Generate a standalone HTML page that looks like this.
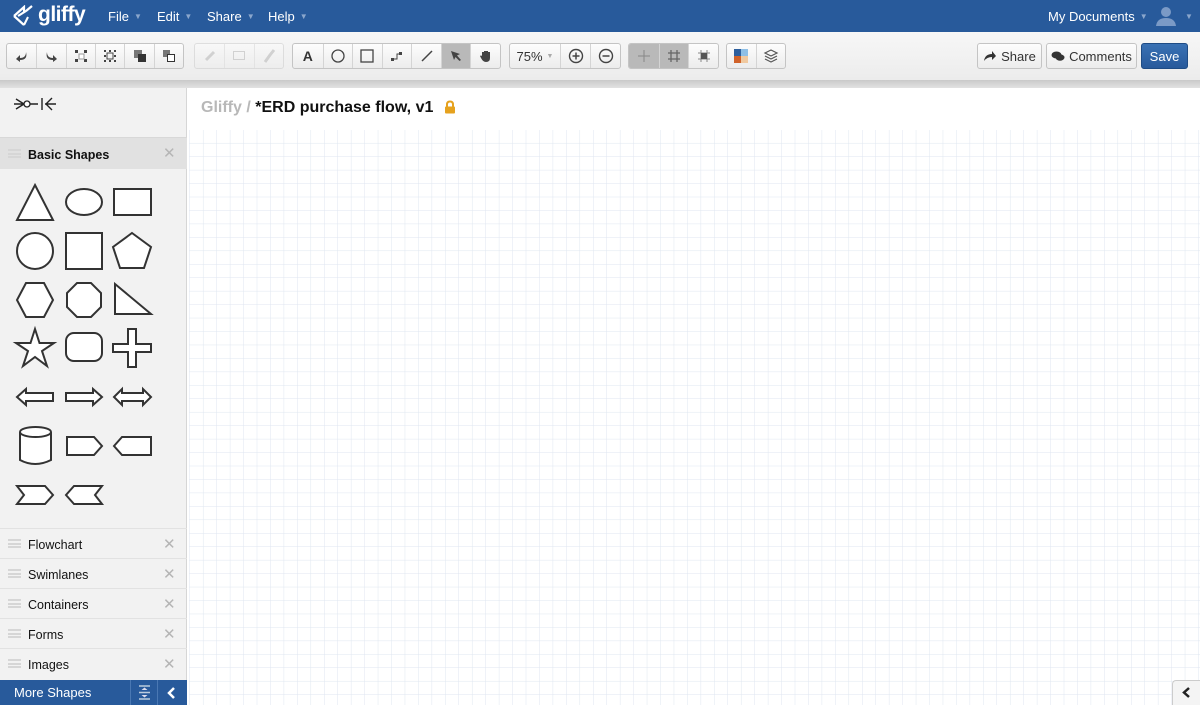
<!DOCTYPE html>
<html><head><meta charset="utf-8"><style>
*{margin:0;padding:0;box-sizing:border-box}
body{width:1200px;height:705px;overflow:hidden;font-family:"Liberation Sans",Arial,sans-serif;background:#fff;position:relative}
.hdr{position:absolute;left:0;top:0;width:1200px;height:32px;background:#285a9b}
.hdr .m{position:absolute;top:9px;color:#fff;font-size:13px}
.hdr .m i{font-style:normal;color:#8aa6cc;font-size:8px;margin-left:5px;vertical-align:2px}
.tb{position:absolute;left:0;top:32px;width:1200px;height:48px;background:linear-gradient(#f7f7f7,#ececec)}
.strip{position:absolute;left:0;top:80px;width:1200px;height:8px;background:linear-gradient(#c9c9c9,#e2e2e2)}
.g{position:absolute;top:11px;height:26px;border:1px solid #c4c4c4;border-radius:3px;background:linear-gradient(#fdfdfd,#ececec);display:flex;overflow:hidden}
.g span{display:flex;align-items:center;justify-content:center;width:30px;height:100%;border-left:1px solid #d4d4d4}
.g span:first-child{border-left:none}
.g span.on{background:#b9b9b9}
.btn{position:absolute;top:11px;height:26px;border:1px solid #c4c4c4;border-radius:3px;background:linear-gradient(#fdfdfd,#ececec);font-size:13px;color:#333;display:flex;align-items:center;justify-content:center;gap:4px}
.left{position:absolute;left:0;top:88px;width:187px;height:592px;background:#f2f2f2;border-right:1px solid #d6d6d6}
.sec{position:absolute;left:0;width:187px;height:30px;border-top:1px solid #e2e2e2;font-size:12.5px;color:#111}
.sec .h{position:absolute;left:8px;top:10px;width:13px;height:9px;border-top:2px solid #d6d6d6;border-bottom:2px solid #d6d6d6}
.sec .h:after{content:"";position:absolute;left:0;top:2px;width:13px;height:2px;background:#d6d6d6}
.sec .t{position:absolute;left:28px;top:9px}
.sec .x{position:absolute;left:163px;top:6px;color:#b5b5b5;font-size:15px}
.foot{position:absolute;left:0;top:680px;width:187px;height:25px;background:#285a9b;color:#fff;font-size:13px}
.canvas{position:absolute;left:189px;top:88px;width:1011px;height:617px;background:#fff}
</style></head><body>
<div class="hdr">
 <svg style="position:absolute;left:12px;top:5px" width="26" height="22" viewBox="0 0 26 22"><path d="M2 11 L12 2 L12 8 M2 11 L12 20 M6 11 L14 6 M14 6 L20 1" stroke="#fff" stroke-width="2.2" fill="none"/><path d="M12 20 L16 12" stroke="#fff" stroke-width="2"/></svg>
 <div style="position:absolute;left:38px;top:3px;color:#fff;font-size:21px;font-weight:bold;letter-spacing:-0.5px">gliffy</div>
 <div class="m" style="left:108px">File<i>▼</i></div>
 <div class="m" style="left:157px">Edit<i>▼</i></div>
 <div class="m" style="left:207px">Share<i>▼</i></div>
 <div class="m" style="left:268px">Help<i>▼</i></div>
 <div class="m" style="left:1048px">My Documents<i>▼</i></div>
 <svg style="position:absolute;left:1155px;top:6px" width="22" height="20" viewBox="0 0 22 20"><circle cx="11" cy="6" r="5" fill="#7b9ac6"/><path d="M1 20 Q2 12 11 12 Q20 12 21 20Z" fill="#7b9ac6"/></svg>
 <div class="m" style="left:1180px"><i>▼</i></div>
</div>
<div class="tb">
 <div class="g" style="left:6px;width:178px">
  <span><svg width="14" height="14"><path d="M11 3 Q11 9 5 9 L5 6 L1 10 L5 13 L5 11 Q13 11 11 3Z" fill="#444"/></svg></span>
  <span><svg width="14" height="14"><path d="M3 3 Q3 9 9 9 L9 6 L13 10 L9 13 L9 11 Q1 11 3 3Z" fill="#444"/></svg></span>
  <span><svg width="14" height="14"><g fill="#444"><rect x="1" y="1" width="3" height="3"/><rect x="10" y="1" width="3" height="3"/><rect x="1" y="10" width="3" height="3"/><rect x="10" y="10" width="3" height="3"/></g><rect x="5" y="5" width="5" height="5" fill="#fff" stroke="#999"/></svg></span>
  <span><svg width="14" height="14"><g fill="#444"><rect x="1" y="1" width="2" height="2"/><rect x="6" y="1" width="2" height="2"/><rect x="11" y="1" width="2" height="2"/><rect x="1" y="11" width="2" height="2"/><rect x="11" y="11" width="2" height="2"/><rect x="1" y="6" width="2" height="2"/><rect x="11" y="6" width="2" height="2"/><rect x="6" y="11" width="2" height="2"/></g><rect x="4" y="4" width="6" height="6" fill="none" stroke="#444"/></svg></span>
  <span><svg width="14" height="14"><rect x="1" y="1" width="8" height="8" fill="#777"/><rect x="5" y="5" width="8" height="8" fill="#333"/></svg></span>
  <span><svg width="14" height="14"><rect x="1" y="1" width="7" height="7" fill="#777"/><rect x="5.5" y="5.5" width="7" height="7" fill="#fff" stroke="#333"/></svg></span>
 </div>
 <div class="g" style="left:194px;width:90px;opacity:.45">
  <span><svg width="14" height="14"><path d="M3 11 L11 3" stroke="#aaa" stroke-width="3"/></svg></span>
  <span><svg width="14" height="14"><rect x="1.5" y="2.5" width="11" height="8" fill="none" stroke="#aaa"/></svg></span>
  <span><svg width="14" height="14"><path d="M3 13 L8 6 L12 1" stroke="#aaa" stroke-width="3"/></svg></span>
 </div>
 <div class="g" style="left:292px;width:209px">
  <span style="font-weight:bold;font-size:14px;color:#333">A</span>
  <span><svg width="14" height="14"><circle cx="7" cy="7" r="6" fill="none" stroke="#444" stroke-width="1.3"/></svg></span>
  <span><svg width="14" height="14"><rect x="1" y="1" width="12" height="12" fill="none" stroke="#444" stroke-width="1.3"/></svg></span>
  <span><svg width="14" height="14"><rect x="1" y="9" width="3" height="3" fill="#444"/><rect x="9" y="3" width="3" height="3" fill="#444"/><path d="M4 10 H7 V5 H9" stroke="#444" fill="none"/></svg></span>
  <span><svg width="14" height="14"><path d="M2 12 L12 2" stroke="#444" stroke-width="1.5"/></svg></span>
  <span class="on"><svg width="14" height="14"><path d="M2 2 L11 5 L8 6.5 L12 11 L10.5 12 L6.5 8 L5 11Z" fill="#444"/></svg></span>
  <span><svg width="14" height="14"><path d="M3 7 V3 H5 V6 V2 H7 V6 V2 H9 V6 V3 H11 V9 Q11 13 7 13 Q4 13 2 9 L1 7 Q2 6 3 7Z" fill="#444"/></svg></span>
 </div>
 <div class="g" style="left:509px;width:112px">
  <span style="width:50px;font-size:13px;color:#333">75%<i style="font-style:normal;color:#aaa;font-size:7px;margin-left:4px">▼</i></span>
  <span><svg width="16" height="16"><circle cx="8" cy="8" r="6.5" fill="none" stroke="#444" stroke-width="1.4"/><path d="M4.5 8 H11.5 M8 4.5 V11.5" stroke="#444" stroke-width="1.5"/></svg></span>
  <span><svg width="16" height="16"><circle cx="8" cy="8" r="6.5" fill="none" stroke="#444" stroke-width="1.4"/><path d="M4.5 8 H11.5" stroke="#444" stroke-width="1.5"/></svg></span>
 </div>
 <div class="g" style="left:628px;width:91px">
  <span class="on"><svg width="14" height="14"><path d="M7 1 V13 M1 7 H13" stroke="#888"/></svg></span>
  <span class="on"><svg width="14" height="14"><path d="M4 1 V13 M10 1 V13 M1 4 H13 M1 10 H13" stroke="#666" stroke-width="1.3"/></svg></span>
  <span><svg width="14" height="14"><path d="M4 1 V13 M10 1 V13 M1 4 H13 M1 10 H13" stroke="#888"/><rect x="4" y="4" width="6" height="6" fill="#555"/></svg></span>
 </div>
 <div class="g" style="left:726px;width:60px">
  <span><svg width="14" height="14"><rect x="0" y="0" width="7" height="7" fill="#2d5f9e"/><rect x="7" y="0" width="7" height="7" fill="#8ebfe6"/><rect x="0" y="7" width="7" height="7" fill="#d0622a"/><rect x="7" y="7" width="7" height="7" fill="#f0c9a0"/></svg></span>
  <span><svg width="16" height="16"><path d="M8 2 L14 5 L8 8 L2 5Z" fill="none" stroke="#555" stroke-width="1.2"/><path d="M2 8 L8 11 L14 8 M2 11 L8 14 L14 11" fill="none" stroke="#555" stroke-width="1.2"/></svg></span>
 </div>
 <div class="btn" style="left:977px;width:65px"><svg width="14" height="12"><path d="M1 11 Q2 4 9 4 V1 L13 6 L9 10 V7 Q4 7 1 11Z" fill="#333"/></svg>Share</div>
 <div class="btn" style="left:1046px;width:91px"><svg width="14" height="12"><ellipse cx="5.5" cy="5" rx="5" ry="3.5" fill="#333"/><ellipse cx="9" cy="7.5" rx="4.5" ry="3.2" fill="#333"/></svg>Comments</div>
 <div class="btn" style="left:1141px;width:47px;background:linear-gradient(#3a72b4,#285a9b);border-color:#1f4c85;color:#fff">Save</div>
</div>
<div class="strip"></div>
<div class="left">
 <svg style="position:absolute;left:14px;top:9px" width="42" height="14" viewBox="0 0 42 14"><path d="M2 2 L10 7 L2 12 M0 7 H24 M31 7 H42 M28 1 V13 M32 7 L38 1 M32 7 L38 13" stroke="#222" stroke-width="1.4" fill="none"/><circle cx="13" cy="7" r="3" fill="#fff" stroke="#222" stroke-width="1.3"/></svg>
 <div class="sec" style="top:49px;height:32px;background:#e1e1e1;border-top:1px solid #d8d8d8"><div class="h" style="top:11px"></div><div class="t" style="top:10px;font-weight:bold">Basic Shapes</div><div class="x" style="top:6px">✕</div></div>
 <svg style="position:absolute;left:0;top:0" width="187" height="340" viewBox="0 88 187 340" fill="#fff" stroke="#333" stroke-width="2">
  <path d="M35 185 L53 220 L17 220Z"/>
  <ellipse cx="84" cy="202" rx="18" ry="13"/>
  <rect x="114" y="189" width="37" height="26"/>
  <circle cx="35" cy="251" r="18"/>
  <rect x="66" y="233" width="36" height="36"/>
  <path d="M132 233 L151 247 L144 268 L120 268 L113 247Z"/>
  <path d="M26 283 L44 283 L53 300 L44 317 L26 317 L17 300Z"/>
  <path d="M77 283 L91 283 L101 293 L101 307 L91 317 L77 317 L67 307 L67 293Z"/>
  <path d="M115 284 L115 314 L151 314Z"/>
  <path d="M35 329 L39.5 343 L54 343 L42 351 L47 366 L35 357 L23 366 L28 351 L16 343 L30.5 343Z"/>
  <rect x="66" y="333" width="36" height="28" rx="8"/>
  <path d="M128 329 H136 V344 H151 V352 H136 V367 H128 V352 H113 V344 H128Z"/>
  <path d="M17 397 L26 389 L26 393 L53 393 L53 401 L26 401 L26 405Z"/>
  <path d="M102 397 L93 389 L93 393 L66 393 L66 401 L93 401 L93 405Z"/>
  <path d="M114 397 L122 389 L122 393 L143 393 L143 389 L151 397 L143 405 L143 401 L122 401 L122 405Z"/>
 </svg>
 <svg style="position:absolute;left:0;top:332px" width="187" height="100" viewBox="0 420 187 100" fill="#fff" stroke="#333" stroke-width="2">
  <path d="M20 432 L20 460 Q35 468 51 460 L51 432"/><ellipse cx="35.5" cy="432" rx="15.5" ry="5"/>
  <path d="M67 437 L94 437 L102 446 L94 455 L67 455Z"/>
  <path d="M114 446 L122 437 L151 437 L151 455 L122 455Z"/>
  <path d="M17 486 L45 486 L53 495 L45 504 L17 504 L24 495Z"/>
  <path d="M74 486 L102 486 L95 495 L102 504 L74 504 L66 495Z"/>
 </svg>
 <div class="sec" style="top:440px"><div class="h"></div><div class="t">Flowchart</div><div class="x">✕</div></div>
 <div class="sec" style="top:470px"><div class="h"></div><div class="t">Swimlanes</div><div class="x">✕</div></div>
 <div class="sec" style="top:500px"><div class="h"></div><div class="t">Containers</div><div class="x">✕</div></div>
 <div class="sec" style="top:530px"><div class="h"></div><div class="t">Forms</div><div class="x">✕</div></div>
 <div class="sec" style="top:560px"><div class="h"></div><div class="t">Images</div><div class="x">✕</div></div>
</div>
<div class="foot">
 <div style="position:absolute;left:14px;top:5px">More Shapes</div>
 <div style="position:absolute;left:130px;top:0;width:28px;height:25px;border-left:1px solid #4a78b3;border-right:1px solid #4a78b3"></div>
 <svg style="position:absolute;left:138px;top:5px" width="13" height="15"><path d="M1 1 H12 M1 14 H12 M1 7.5 H12" stroke="#bcd" stroke-width="1.5"/><path d="M3.5 5 L6.5 2.5 L9.5 5Z M3.5 10 L6.5 12.5 L9.5 10Z" fill="#dde"/></svg>
 <svg style="position:absolute;left:167px;top:7px" width="10" height="12"><path d="M7 1 L2 6 L7 11" stroke="#fff" stroke-width="2.5" fill="none"/></svg>
</div>
<div class="canvas">
 <svg style="position:absolute;left:0;top:42px" width="1011" height="575"><defs><pattern id="p" width="13.45" height="13.45" patternUnits="userSpaceOnUse" x="1" y="0"><path d="M13.45 0 V13.45 M0 13.45 H13.45" stroke="#dfe6f0" stroke-width="1" fill="none"/></pattern></defs><rect width="1011" height="575" fill="url(#p)"/></svg>
 <div style="position:absolute;left:12px;top:11px;font-size:16px;font-weight:bold;color:#111"><span style="color:#b8b8b8">Gliffy / </span>*ERD purchase flow, v1</div>
 <svg style="position:absolute;left:255px;top:12px" width="12" height="14"><path d="M3 7 V4.5 Q3 1.5 6 1.5 Q9 1.5 9 4.5 V7" stroke="#e6a21e" stroke-width="2" fill="none"/><rect x="1" y="6.5" width="10" height="7" rx="1" fill="#e6a21e"/></svg>
 <div style="position:absolute;left:983px;top:592px;width:28px;height:25px;background:#f4f4f4;border:1px solid #ccc;border-right:none;border-bottom:none;border-radius:4px 0 0 0"></div>
 <svg style="position:absolute;left:993px;top:599px" width="9" height="11"><path d="M7 1 L2 5.5 L7 10" stroke="#222" stroke-width="2.5" fill="none"/></svg>
</div>
</body></html>
